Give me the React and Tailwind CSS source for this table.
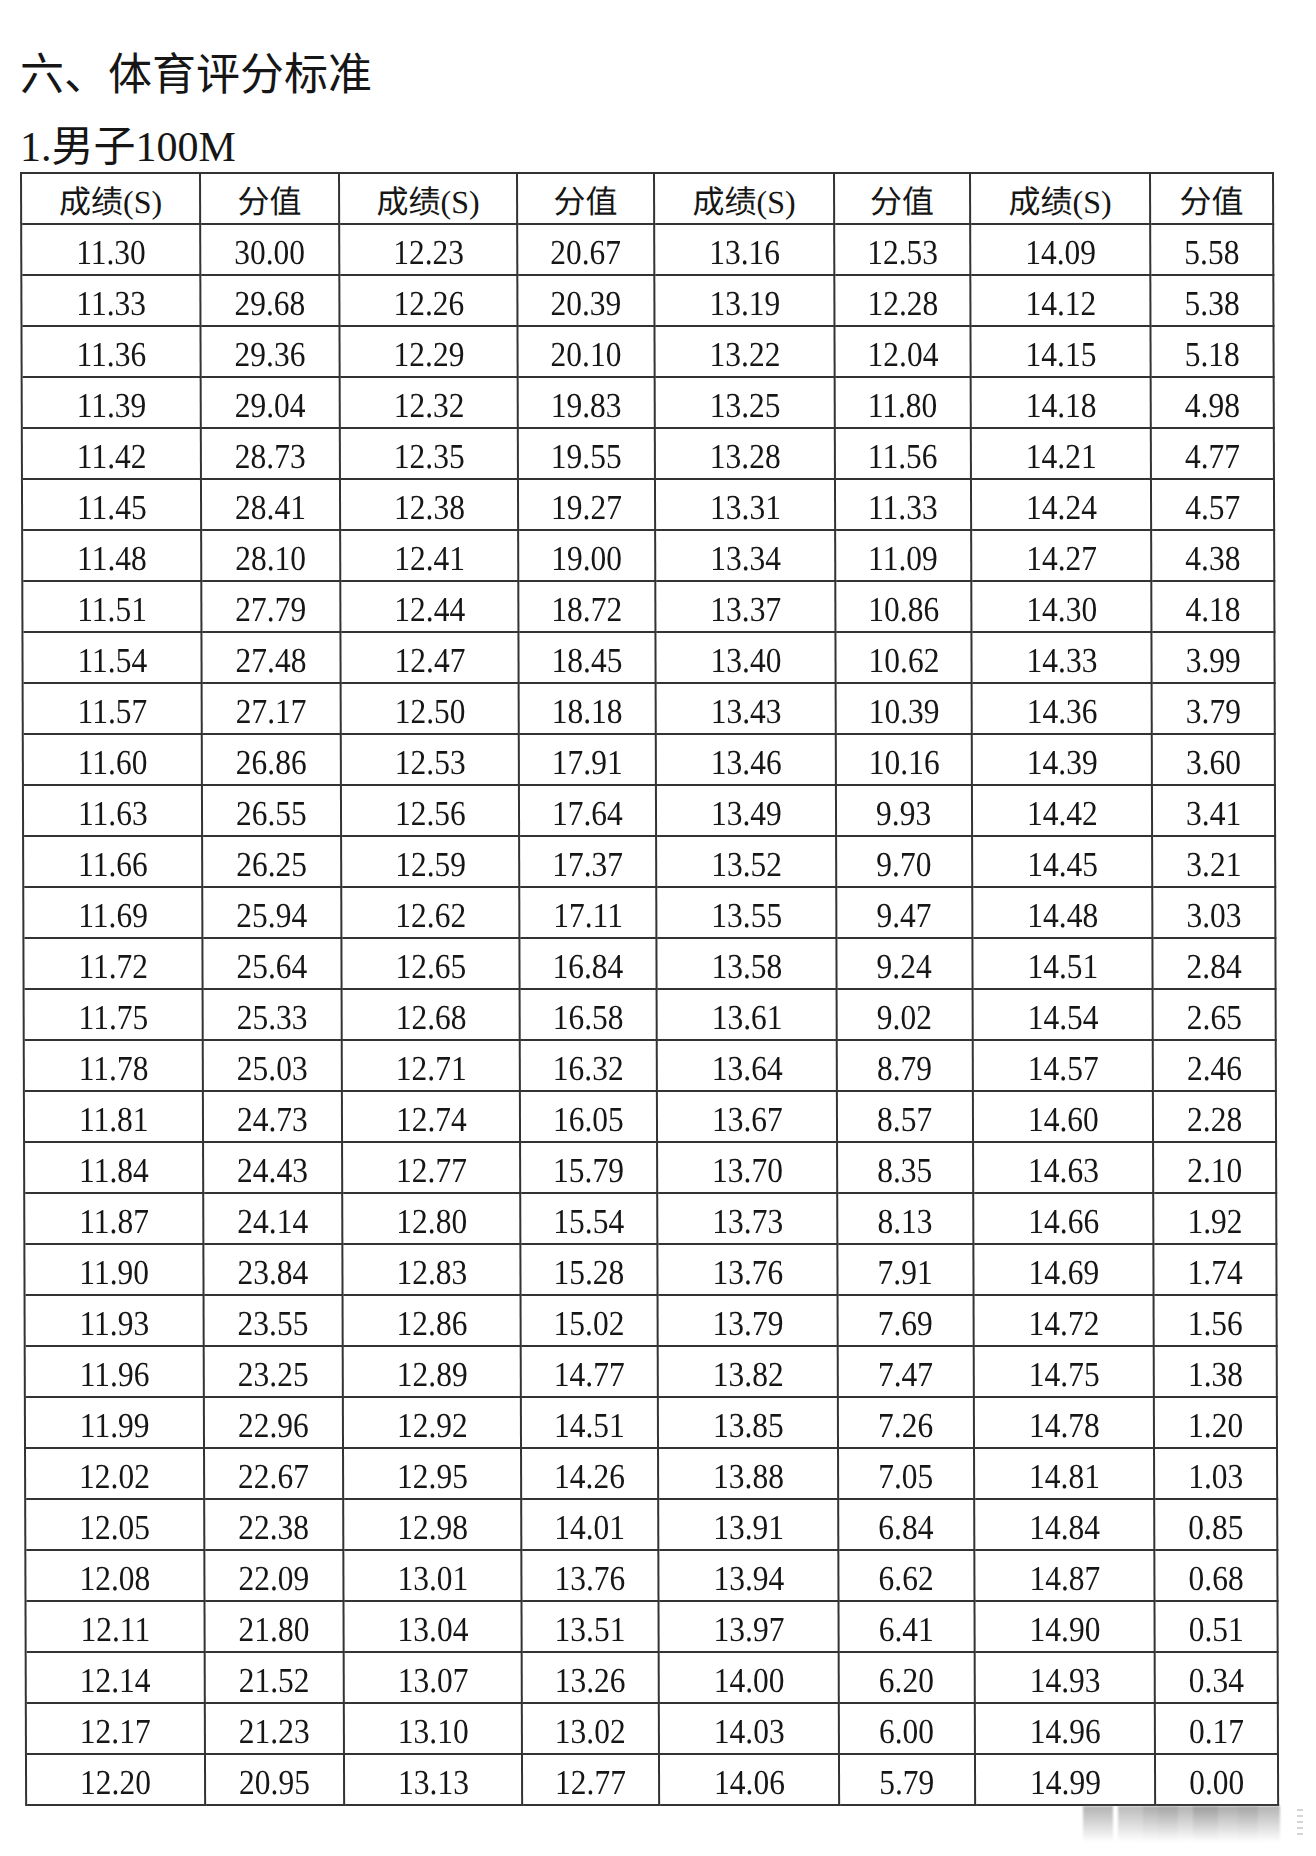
const serif = "font-['Liberation_Serif','Noto_Sans_CJK_SC',serif]";

const scoresA = ["30.00","29.68","29.36","29.04","28.73","28.41","28.10","27.79","27.48","27.17","26.86","26.55","26.25","25.94","25.64","25.33","25.03","24.73","24.43","24.14","23.84","23.55","23.25","22.96","22.67","22.38","22.09","21.80","21.52","21.23","20.95"];
const scoresB = ["20.67","20.39","20.10","19.83","19.55","19.27","19.00","18.72","18.45","18.18","17.91","17.64","17.37","17.11","16.84","16.58","16.32","16.05","15.79","15.54","15.28","15.02","14.77","14.51","14.26","14.01","13.76","13.51","13.26","13.02","12.77"];
const scoresC = ["12.53","12.28","12.04","11.80","11.56","11.33","11.09","10.86","10.62","10.39","10.16","9.93","9.70","9.47","9.24","9.02","8.79","8.57","8.35","8.13","7.91","7.69","7.47","7.26","7.05","6.84","6.62","6.41","6.20","6.00","5.79"];
const scoresD = ["5.58","5.38","5.18","4.98","4.77","4.57","4.38","4.18","3.99","3.79","3.60","3.41","3.21","3.03","2.84","2.65","2.46","2.28","2.10","1.92","1.74","1.56","1.38","1.20","1.03","0.85","0.68","0.51","0.34","0.17","0.00"];

// 成绩从 11.30 起每行加 0.03，四组各 31 行
const time = (start, i) => ((start + 3 * i) / 100).toFixed(2);

const rows = scoresA.map((a, i) => [
  time(1130, i), a,
  time(1223, i), scoresB[i],
  time(1316, i), scoresC[i],
  time(1409, i), scoresD[i],
]);

const header = ["成绩(S)", "分值", "成绩(S)", "分值", "成绩(S)", "分值", "成绩(S)", "分值"];

const cell = "flex items-center justify-center border-r-2 border-b-2 border-[#333]";

const bars = [
  "w-[30px] opacity-50",
  "w-[5px] opacity-0",
  "w-[25px] opacity-45",
  "w-[15px] opacity-55",
  "w-[20px] opacity-60",
  "w-[15px] opacity-50",
  "w-[25px] opacity-65",
  "w-[20px] opacity-55",
  "w-[20px] opacity-60",
  "w-[22px] opacity-50",
];

const App = () => {
  return (
    <div className={`min-h-[1856px] bg-white pl-[20px] text-[#161616] ${serif}`}>
      <h1 className="pt-[49px] font-['Noto_Sans_CJK_SC',sans-serif] text-[44px] leading-[44px] font-normal">
        六、体育评分标准
      </h1>
      <h2 className="mt-[33px] text-[42px] leading-[42px] font-normal">1.男子100M</h2>

      <div className="mt-[4px] w-[1254px] origin-top skew-x-[0.18deg] border-t-2 border-l-2 border-[#333]">
        <div className="grid grid-cols-[179px_139px_178px_137px_180px_136px_180px_123px]">
          {header.map((h, i) => (
            <div key={i} className={`${cell} h-[51px] pt-[7px] text-[32px] leading-none`}>
              {h}
            </div>
          ))}
          {rows.map((r, ri) =>
            r.map((v, ci) => (
              <div key={`${ri}-${ci}`} className={`${cell} h-[51px] pt-[6px] text-[35px] leading-none`}>
                <span className="inline-block scale-x-[0.9]">{v}</span>
              </div>
            ))
          )}
        </div>
      </div>

      {/* 右下角模糊水印 */}
      <div className="ml-[1063px] flex h-[38px] items-start">
        <div className="flex h-[36px] blur-[1px]">
          {bars.map((b, i) => (
            <div key={i} className={`${b} h-full bg-linear-to-b from-[#666] to-transparent`} />
          ))}
        </div>
        <div className="mt-[3px] ml-[17px] flex w-[6px] flex-col gap-[4px] opacity-40">
          <div className="h-[2px] bg-[#999]" />
          <div className="h-[2px] bg-[#999]" />
          <div className="h-[2px] bg-[#999]" />
          <div className="h-[2px] bg-[#999]" />
          <div className="h-[2px] bg-[#999]" />
        </div>
      </div>
    </div>
  );
};

export default App;
